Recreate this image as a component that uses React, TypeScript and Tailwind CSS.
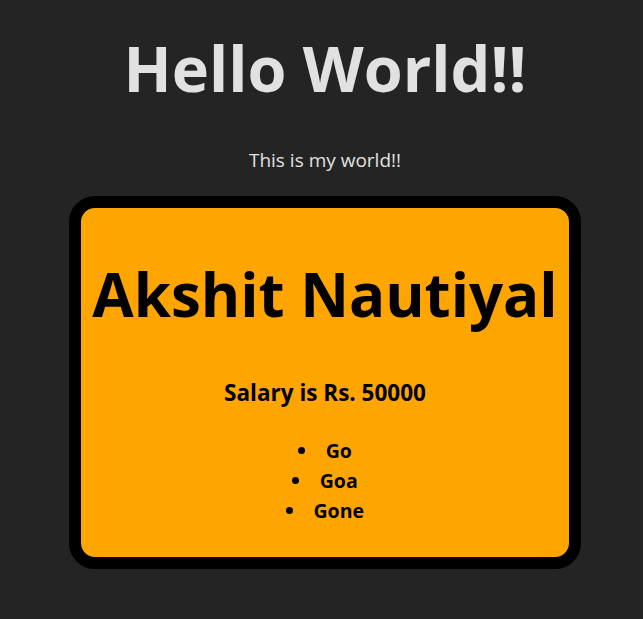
const skills = ["Go", "Goa", "Gone"]

function Card() {
    return (
        <div className="w-[512px] h-[373px] rounded-[26px] border-[12px] border-black bg-[#ffa500] text-black flex flex-col items-center">
            <h1 className="mt-[53px] text-[60px] leading-[1.1] font-bold">Akshit Nautiyal</h1>
            <h3 className="mt-[49px] text-[22.5px] leading-[1.5] font-bold">Salary is Rs. 50000</h3>
            <ul className="mt-[26px] list-disc list-inside text-[19.5px] leading-[30px] font-bold">
                {skills.map((s) => (
                    <li key={s}>{s}</li>
                ))}
            </ul>
        </div>
    )
}

export default function App() {
    return (
        <div className="min-h-[619px] bg-[#242424] text-[#e1e1e1] font-['Open_Sans',sans-serif] flex flex-col items-center pl-[7px] text-center">
            <h1 className="mt-[33px] text-[63px] leading-[1.1] font-bold">Hello World!!</h1>
            <p className="mt-[44px] text-[19px] leading-[1.5]">This is my world!!</p>
            <div className="mt-[21px]">
                <Card />
            </div>
        </div>
    )
}
